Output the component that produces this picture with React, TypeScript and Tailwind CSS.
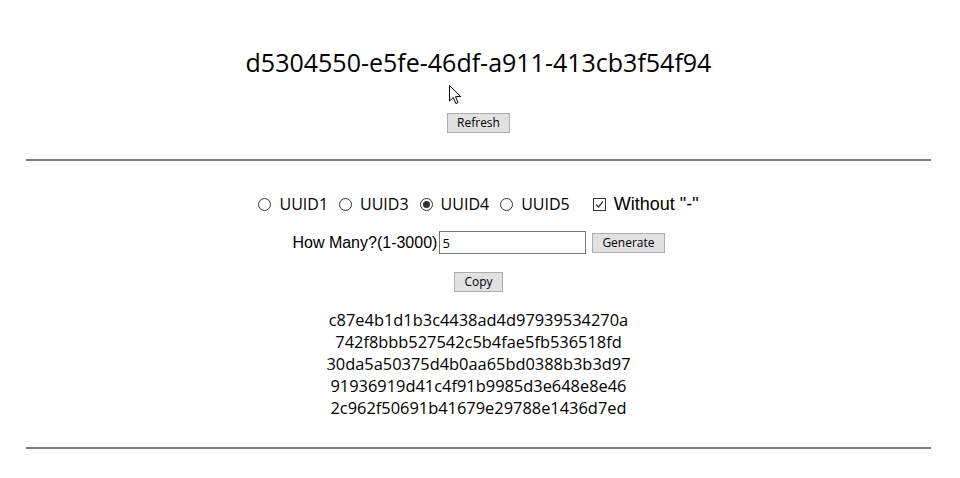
import React from "react";

const hashes = [
  "c87e4b1d1b3c4438ad4d97939534270a",
  "742f8bbb527542c5b4fae5fb536518fd",
  "30da5a50375d4b0aa65bd0388b3b3d97",
  "91936919d41c4f91b9985d3e648e8e46",
  "2c962f50691b41679e29788e1436d7ed",
];

const Radio = ({ checked, label }: { checked?: boolean; label: string }) => (
  <label className="flex items-center">
    <span className="flex h-[13px] w-[13px] items-center justify-center rounded-full border border-[#333] bg-white">
      {checked && <span className="h-[7px] w-[7px] rounded-full bg-[#333]" />}
    </span>
    <span className="ml-[8px] font-['Open_Sans',sans-serif] text-[16px]">{label}</span>
  </label>
);

const btn =
  "h-[20px] border border-[#adadad] bg-[#e1e1e1] px-[9px] text-[12px] leading-[18px] text-black font-['Open_Sans',sans-serif]";

const App = () => {
  return (
    <main className="relative h-[478px] w-[960px] overflow-hidden bg-white text-black">
      <div className="flex w-[957px] flex-col items-center">
        <h1 className="mt-[46px] h-[32px] text-[25px] leading-[32px] font-normal font-['Open_Sans',sans-serif]">
          d5304550-e5fe-46df-a911-413cb3f54f94
        </h1>
        <button className={`mt-[35px] ${btn}`}>Refresh</button>
      </div>
      <hr className="ml-[26px] mr-[29px] mt-[26px] h-[2px] border-0 bg-[#808080]" />
      <div className="flex w-[957px] flex-col items-center font-['Liberation_Sans',Arial,sans-serif] text-[16px]">
        <div className="mt-[33px] flex h-[20px] items-center gap-[11px]">
          <Radio label="UUID1" />
          <Radio label="UUID3" />
          <Radio checked label="UUID4" />
          <Radio label="UUID5" />
          <label className="ml-[12px] flex items-center">
            <span className="flex h-[13px] w-[13px] items-center justify-center border border-[#333] bg-white">
              <svg width="9" height="9" viewBox="0 0 9 9">
                <path d="M1 4.5 L3.5 7 L8 1.5" stroke="#333" strokeWidth="1.2" fill="none" />
              </svg>
            </span>
            <span className="ml-[8px] text-[18px]">Without "-"</span>
          </label>
        </div>
        <div className="mt-[17px] flex h-[23px] items-center">
          <span className="mr-[2px]">How Many?(1-3000)</span>
          <input
            defaultValue="5"
            className="h-[23px] w-[147px] border border-[#767676] px-[2px] text-[13px] font-['Open_Sans',sans-serif] outline-none"
          />
          <button className={`ml-[6px] ${btn}`}>Generate</button>
        </div>
        <button className={`mt-[18px] ${btn}`}>Copy</button>
        <div className="mt-[17px] flex flex-col items-center font-['Open_Sans',sans-serif] text-[16.4px] leading-[22px]">
          {hashes.map((h) => (
            <div key={h}>{h}</div>
          ))}
        </div>
      </div>
      <hr className="ml-[26px] mr-[29px] mt-[28px] h-[2px] border-0 bg-[#808080]" />
      <svg className="absolute left-[449px] top-[85px]" width="13" height="20" viewBox="0 0 13 20">
        <path d="M0.5 0.5 L0.5 16 L4.3 12.4 L6.8 18.5 L9 17.6 L6.5 11.6 L11.8 11.6 Z" fill="white" stroke="black" strokeWidth="1" />
      </svg>
    </main>
  );
};

export default App;
